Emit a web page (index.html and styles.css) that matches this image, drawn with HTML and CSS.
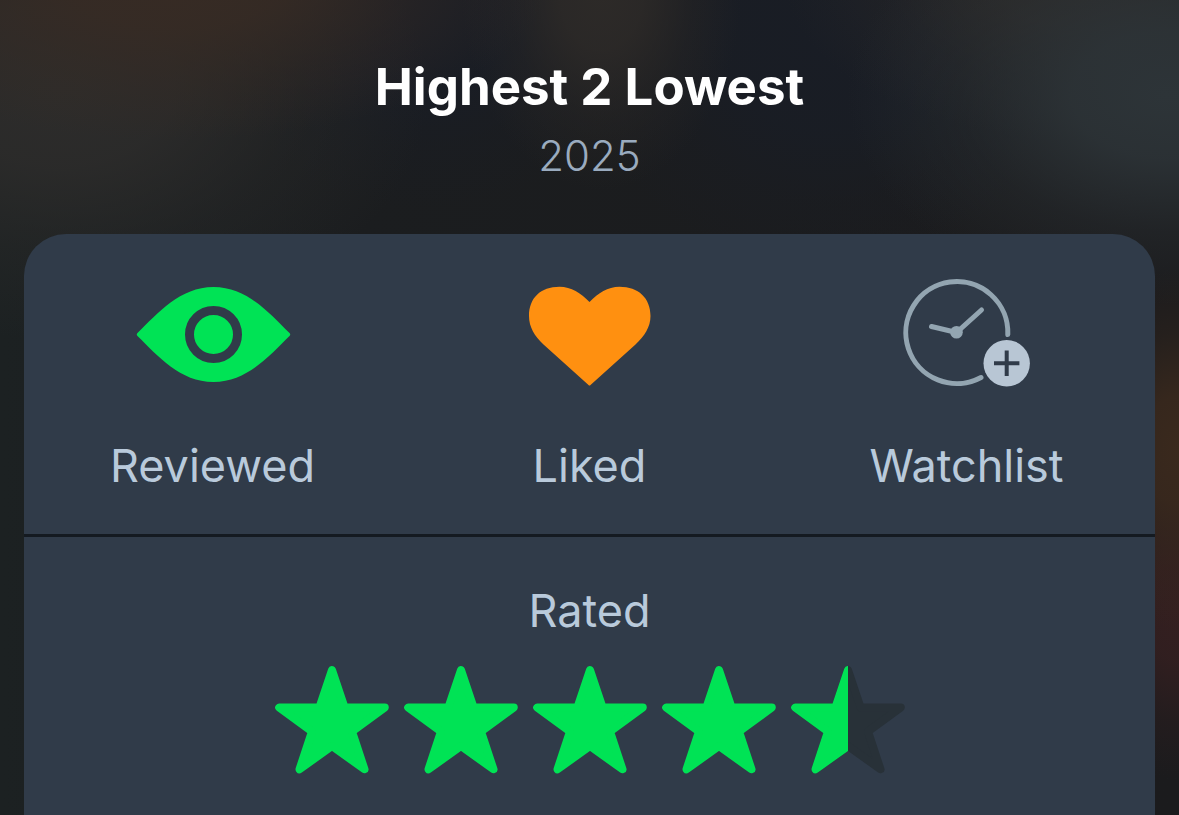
FILE: index.html
```
<!DOCTYPE html>
<html lang="en">
<head>
<meta charset="utf-8">
<meta name="viewport" content="width=device-width, initial-scale=1">
<title>Highest 2 Lowest</title>
<link rel="stylesheet" href="styles.css">
</head>
<body>
<main class="sheet">
  <header class="film">
    <h1 class="film-title">Highest 2 Lowest</h1>
    <p class="film-year">2025</p>
  </header>
  <section class="card">
    <div class="actions">
      <button class="action" type="button">
        <svg class="action-icon" viewBox="0 0 160 120" aria-hidden="true">
          <path class="green" d="M4.500 62Q3 60.500 4.500 59C25 39 47 13 80.500 13S136 39 156.500 59Q158 60.500 156.500 62C136 82 114 108 80.500 108S25 82 4.500 62Z"/>
          <circle class="iris" cx="80.500" cy="60.500" r="24"/>
        </svg>
        <span>Reviewed</span>
      </button>
      <button class="action" type="button">
        <svg class="action-icon" viewBox="0 0 160 120" aria-hidden="true">
          <path class="orange" d="M79.500 28C70.500 19 61.500 12.700 49.500 12.700C30.500 12.700 19 24 19 42C19 53 24.500 62 33.500 70.500L78.500 111Q79.500 112 80.500 111L125.500 70.500C134.500 62 140.500 53 140.500 42C140.500 24 128.500 12.700 109.500 12.700C97.500 12.700 88.500 19 79.500 28Z"/>
        </svg>
        <span>Liked</span>
      </button>
      <button class="action" type="button">
        <svg class="action-icon" viewBox="0 0 160 120" aria-hidden="true">
          <path class="clock" d="M120.800 60.500A51 51 0 1 0 94 103.500"/>
          <path class="clock" d="M44.500 52.500L69.500 58.500L94.500 36"/>
          <circle class="hub" cx="69.500" cy="58.200" r="6.300"/>
          <circle class="badge" cx="119.700" cy="89.300" r="23.200"/>
          <path class="plus" d="M107 89.300H132.400M119.700 76.600V102"/>
        </svg>
        <span>Watchlist</span>
      </button>
    </div>
    <div class="rating">
      <label class="rating-label" for="rating">Rated</label>
      <div class="stars">
        <svg class="star" viewBox="0 0 114 110" aria-hidden="true"><path id="star" d="M57 5L69.600 42.500H109.800L77 66.500L89.500 104.300L57 81L24.500 104.300L37 66.500L4.200 42.500H44.400Z"/></svg>
        <svg class="star" viewBox="0 0 114 110" aria-hidden="true"><use href="#star"/></svg>
        <svg class="star" viewBox="0 0 114 110" aria-hidden="true"><use href="#star"/></svg>
        <svg class="star" viewBox="0 0 114 110" aria-hidden="true"><use href="#star"/></svg>
        <svg class="star" viewBox="0 0 114 110" aria-hidden="true">
          <clipPath id="left-half"><rect width="57" height="110"/></clipPath>
          <use class="star-empty" href="#star"/>
          <g clip-path="url(#left-half)"><use href="#star"/></g>
        </svg>
        <input class="rating-input" id="rating" type="range" min="0" max="5" step="0.5" value="4.5">
      </div>
    </div>
  </section>
</main>
</body>
</html>
```
FILE: styles.css
```
* {
  box-sizing: border-box;
}

body {
  margin: 0;
  min-height: 100vh;
  font-family: Inter, "Liberation Sans", sans-serif;
  color: #b9cadb;
  background:
    radial-gradient(ellipse 370px 160px at 15% -20px, #372b24, #372b24dd 30%, #372b2466 65%, #372b2400),
    radial-gradient(ellipse 370px 250px at 5% 90px, #2d2c2b, #2d2c2bdd 30%, #2d2c2b55 65%, #2d2c2b00),
    radial-gradient(ellipse 320px 210px at 99% 95px, #2d3438, #2d3438dd 30%, #2d343855 65%, #2d343800),
    radial-gradient(ellipse 300px 160px at 92% -20px, #2c2a29, #2c2a29dd 30%, #2c2a2955 65%, #2c2a2900),
    radial-gradient(ellipse 140px 200px at 51% -10px, #2d2a28, #2d2a28dd 30%, #2d2a2855 65%, #2d2a2800),
    radial-gradient(ellipse 250px 230px at 70% 40px, #191d25, #191d25dd 40%, #191d2555 70%, #191d2500),
    radial-gradient(ellipse 220px 200px at 36% 10px, #191d25, #191d25dd 40%, #191d2555 70%, #191d2500),
    radial-gradient(ellipse 120px 180px at 100% 450px, #3a291d, #3a291ddd 30%, #3a291d55 65%, #3a291d00),
    radial-gradient(ellipse 120px 170px at 100% 610px, #341f20, #341f20dd 30%, #341f2055 65%, #341f2000),
    linear-gradient(90deg, #1c2122, #1b1d1f 30%, #1b1b1d);
  background-color: #1b1c1f;
}

.sheet {
  display: flex;
  flex-direction: column;
  min-height: 100vh;
  padding: 0 24px;
}

.film {
  padding: 55px 0 50px;
  text-align: center;
}

.film-title {
  margin: 0;
  font-size: 51px;
  line-height: 64px;
  font-weight: 700;
  color: #fff;
}

.film-year {
  margin: 9px 0 0;
  font-size: 42px;
  line-height: 56px;
  font-weight: 300;
  color: #9aabbf;
}

.card {
  flex: 1;
  background: #303b49;
  border-radius: 42px 42px 0 0;
}

.actions {
  display: grid;
  grid-template-columns: repeat(3, 1fr);
  border-bottom: 3px solid #141a21;
}

.action {
  display: flex;
  flex-direction: column;
  align-items: center;
  gap: 44px;
  padding: 40px 0;
  border: 0;
  background: none;
  font: inherit;
  font-size: 45px;
  line-height: 56px;
  color: inherit;
  cursor: pointer;
}

.action-icon {
  width: 160px;
  height: 120px;
}

.green {
  fill: #00e355;
}

.iris {
  fill: none;
  stroke: #303b49;
  stroke-width: 9px;
}

.orange {
  fill: #ff9010;
}

.clock {
  fill: none;
  stroke: #93a5b1;
  stroke-width: 5px;
  stroke-linecap: round;
}

.hub {
  fill: #93a5b1;
}

.badge {
  fill: #b8c6d4;
}

.plus {
  stroke: #303b49;
  stroke-width: 4px;
}

.rating {
  display: flex;
  flex-direction: column;
  align-items: center;
  gap: 26px;
  padding: 46px 0 40px;
}

.rating-label {
  font-size: 45px;
  line-height: 56px;
}

.stars {
  position: relative;
  display: flex;
  gap: 15px;
}

.star {
  width: 114px;
  height: 110px;
  fill: #00e355;
  stroke: #00e355;
  stroke-width: 8px;
  stroke-linejoin: round;
}

.star-empty {
  fill: #283138;
  stroke: #283138;
}

.rating-input {
  position: absolute;
  inset: 0;
  width: 100%;
  height: 100%;
  margin: 0;
  opacity: 0;
  cursor: pointer;
}
```
